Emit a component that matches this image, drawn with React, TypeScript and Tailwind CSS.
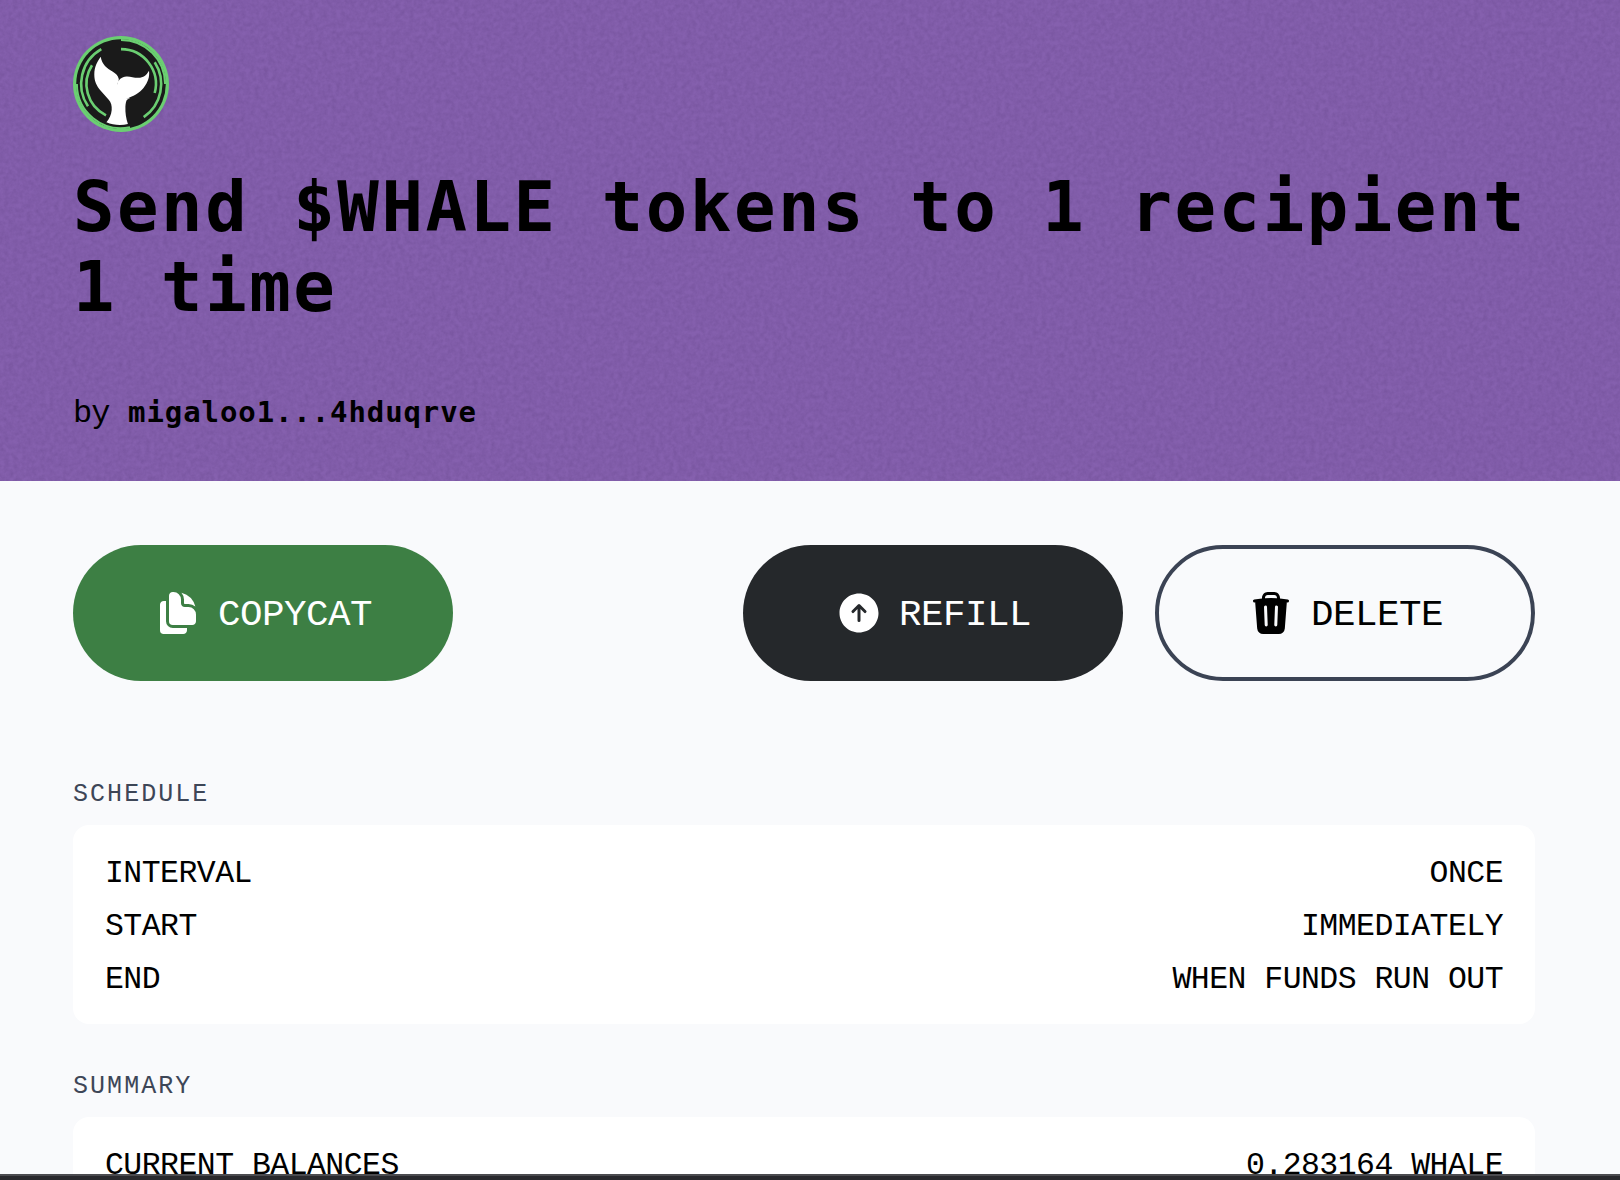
import type { ReactNode } from "react";
import { HiArrowUpCircle, HiDocumentDuplicate, HiTrash } from "react-icons/hi2";

function WhaleLogo() {
  return (
    <svg viewBox="0 0 96 96" className="block size-24" aria-label="WHALE">
      <circle cx="48" cy="48" r="48" fill="#6bcf72" />
      <circle cx="48" cy="48" r="44.8" fill="#1a1a1a" />
      <g fill="none" stroke="#6bcf72" strokeWidth="2.6">
        <path d="M48 3.9A44.1 44.1 0 0 1 92.1 48" strokeWidth="2" />
        <path d="M3.9 48A44.1 44.1 0 0 0 57 91.2" strokeWidth="2" />
        <path d="M48 13.1A34.9 34.9 0 0 1 81.7 57" />
        <path d="M81.7 26.3A40 40 0 0 1 70.7 81.1" />
        <path d="M28.3 13.2A40 40 0 0 0 15 70.3" />
        <path d="M19 29.3A34.7 34.7 0 0 0 33 79.3" />
      </g>
      <path
        fill="#fff"
        d="M27.7 20.7C24 26 21.3 31 21.3 38.5C21.3 45.5 23.5 49.5 27.5 54.5L35.5 63.5C38.2 66.5 39 69.5 38.7 74C38.2 79 36.5 82.5 33.4 86.3C40 89.2 48.5 89.5 54.9 88C53 82 52.2 77 52.4 70.5C52.6 67 53.2 65 54 63.7L57.3 62L53 62.8C60 60.5 66.5 57 70.5 52C75 46 76.8 41 76 34.7C73.5 39 70.5 41.8 65.3 41.8C60.5 41.8 57.5 40.2 53.5 40.4C48.5 40.7 45.2 43.5 44.3 48.8C44 46.8 46 46 45.8 43C45 39.5 42.5 37.3 39.5 35.5C34 32.5 29 28.5 27.7 20.7Z"
      />
    </svg>
  );
}

function Grain() {
  return (
    <svg className="pointer-events-none absolute inset-0 size-full" aria-hidden="true">
      <filter id="grain" x="0" y="0" width="100%" height="100%" colorInterpolationFilters="sRGB">
        <feTurbulence type="fractalNoise" baseFrequency="0.22" numOctaves="3" seed="4" stitchTiles="stitch" />
        <feColorMatrix values="0 0 0 0 0.36  0 0 0 0 0.24  0 0 0 0 0.50  0.4 0.2 0 0 -0.19" />
      </filter>
      <rect width="100%" height="100%" filter="url(#grain)" />
    </svg>
  );
}

function ActionButton({ icon, label, className }: { icon: ReactNode; label: string; className: string }) {
  return (
    <button
      type="button"
      className={`flex h-[136px] w-[380px] items-center justify-center gap-4 rounded-full text-[37.5px] tracking-[-0.47px] ${className}`}
    >
      {icon}
      <span className="pt-1 leading-[48px]">{label}</span>
    </button>
  );
}

function Section({ title, rows }: { title: string; rows: [string, string][] }) {
  return (
    <section>
      <h2 className="text-[25px] leading-8 tracking-[2.05px] text-[#3d4657]">{title}</h2>
      <dl className="mt-3.5 flex flex-col gap-2 rounded-2xl bg-white px-8 pt-[26px] pb-[22px] text-[31.5px] leading-[45px] tracking-[-0.54px]">
        {rows.map(([name, value]) => (
          <div key={name} className="flex justify-between">
            <dt>{name}</dt>
            <dd>{value}</dd>
          </div>
        ))}
      </dl>
    </section>
  );
}

export default function App() {
  return (
    <div className="relative h-[1180px] w-[1620px] overflow-hidden bg-[#f9fafc] font-['Liberation_Mono',monospace] text-black">
      <header className="relative h-[481px] overflow-hidden bg-[#8560ae]">
        <Grain />
        <div className="relative pt-9 pr-[85px] pl-[73px]">
          <WhaleLogo />
          <h1 className="mt-[35px] w-[1462px] font-['DejaVu_Sans_Mono',monospace] text-[69px] leading-[80px] font-bold tracking-[2.52px]">
            Send $WHALE tokens to 1 recipient 1 time
          </h1>
          <p className="mt-[65px] text-[32px] leading-10 tracking-[-0.84px]">
            by{" "}
            <span className="font-['DejaVu_Sans_Mono',monospace] text-[29px] font-bold tracking-[0.9px]">
              migaloo1...4hduqrve
            </span>
          </p>
        </div>
      </header>
      <main className="pt-16 pr-[85px] pl-[73px]">
        <div className="flex gap-8">
          <ActionButton
            icon={<HiDocumentDuplicate className="size-12" />}
            label="COPYCAT"
            className="mr-auto bg-[#3d7f44] text-white"
          />
          <ActionButton
            icon={<HiArrowUpCircle className="size-12" />}
            label="REFILL"
            className="bg-[#25282b] text-white"
          />
          <ActionButton
            icon={<HiTrash className="size-12" />}
            label="DELETE"
            className="border-4 border-[#3b4354]"
          />
        </div>
        <div className="mt-[98px] flex flex-col gap-[47px]">
          <Section
            title="SCHEDULE"
            rows={[
              ["INTERVAL", "ONCE"],
              ["START", "IMMEDIATELY"],
              ["END", "WHEN FUNDS RUN OUT"],
            ]}
          />
          <Section title="SUMMARY" rows={[["CURRENT BALANCES", "0.283164 WHALE"]]} />
        </div>
      </main>
      <div className="absolute inset-x-0 bottom-0 h-1.5 border-t-2 border-[#4b4b4f] bg-[#29292d]" />
    </div>
  );
}
